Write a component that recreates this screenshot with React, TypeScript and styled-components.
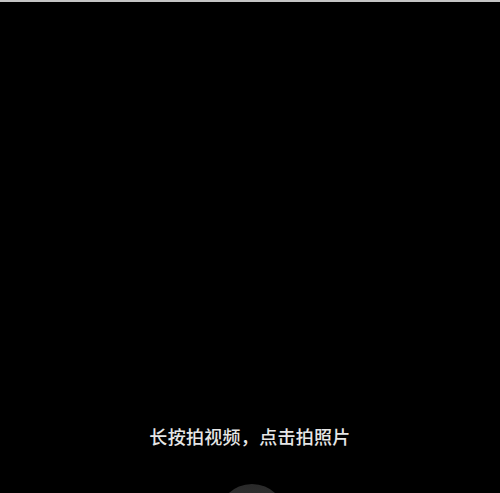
import React from "react";
import styled, { createGlobalStyle } from "styled-components";

const GlobalStyle = createGlobalStyle`
  html, body {
    margin: 0;
    padding: 0;
    background: #000;
  }
  body {
    font-family: "Noto Sans CJK SC", "Noto Sans", sans-serif;
  }
`;

const Screen = styled.div`
  height: 100vh;
  box-sizing: border-box;
  border-top: 2px solid #c4c4c4;
  background: #000;
  display: flex;
  flex-direction: column;
  align-items: center;
  justify-content: flex-end;
  overflow: hidden;
`;

const Viewfinder = styled.div`
  flex: 1;
  width: 100%;
`;

const Hint = styled.div`
  color: #e6e6e6;
  font-size: 18px;
  font-weight: 500;
  line-height: 24px;
  letter-spacing: 0.3px;
  margin-bottom: 36px;
`;

const ShutterWrap = styled.div`
  height: 9px;
  width: 100%;
  display: flex;
  justify-content: center;
`;

const Shutter = styled.button`
  flex: none;
  width: 68px;
  height: 68px;
  margin-left: 3px;
  border-radius: 50%;
  border: none;
  padding: 0;
  background: linear-gradient(to bottom, #2a2a2a 0%, #333 40%, #333 100%);
`;

export default function App() {
  return (
    <>
      <GlobalStyle />
      <Screen>
        <Viewfinder />
        <Hint>长按拍视频，点击拍照片</Hint>
        <ShutterWrap>
          <Shutter aria-label="拍摄" />
        </ShutterWrap>
      </Screen>
    </>
  );
}
